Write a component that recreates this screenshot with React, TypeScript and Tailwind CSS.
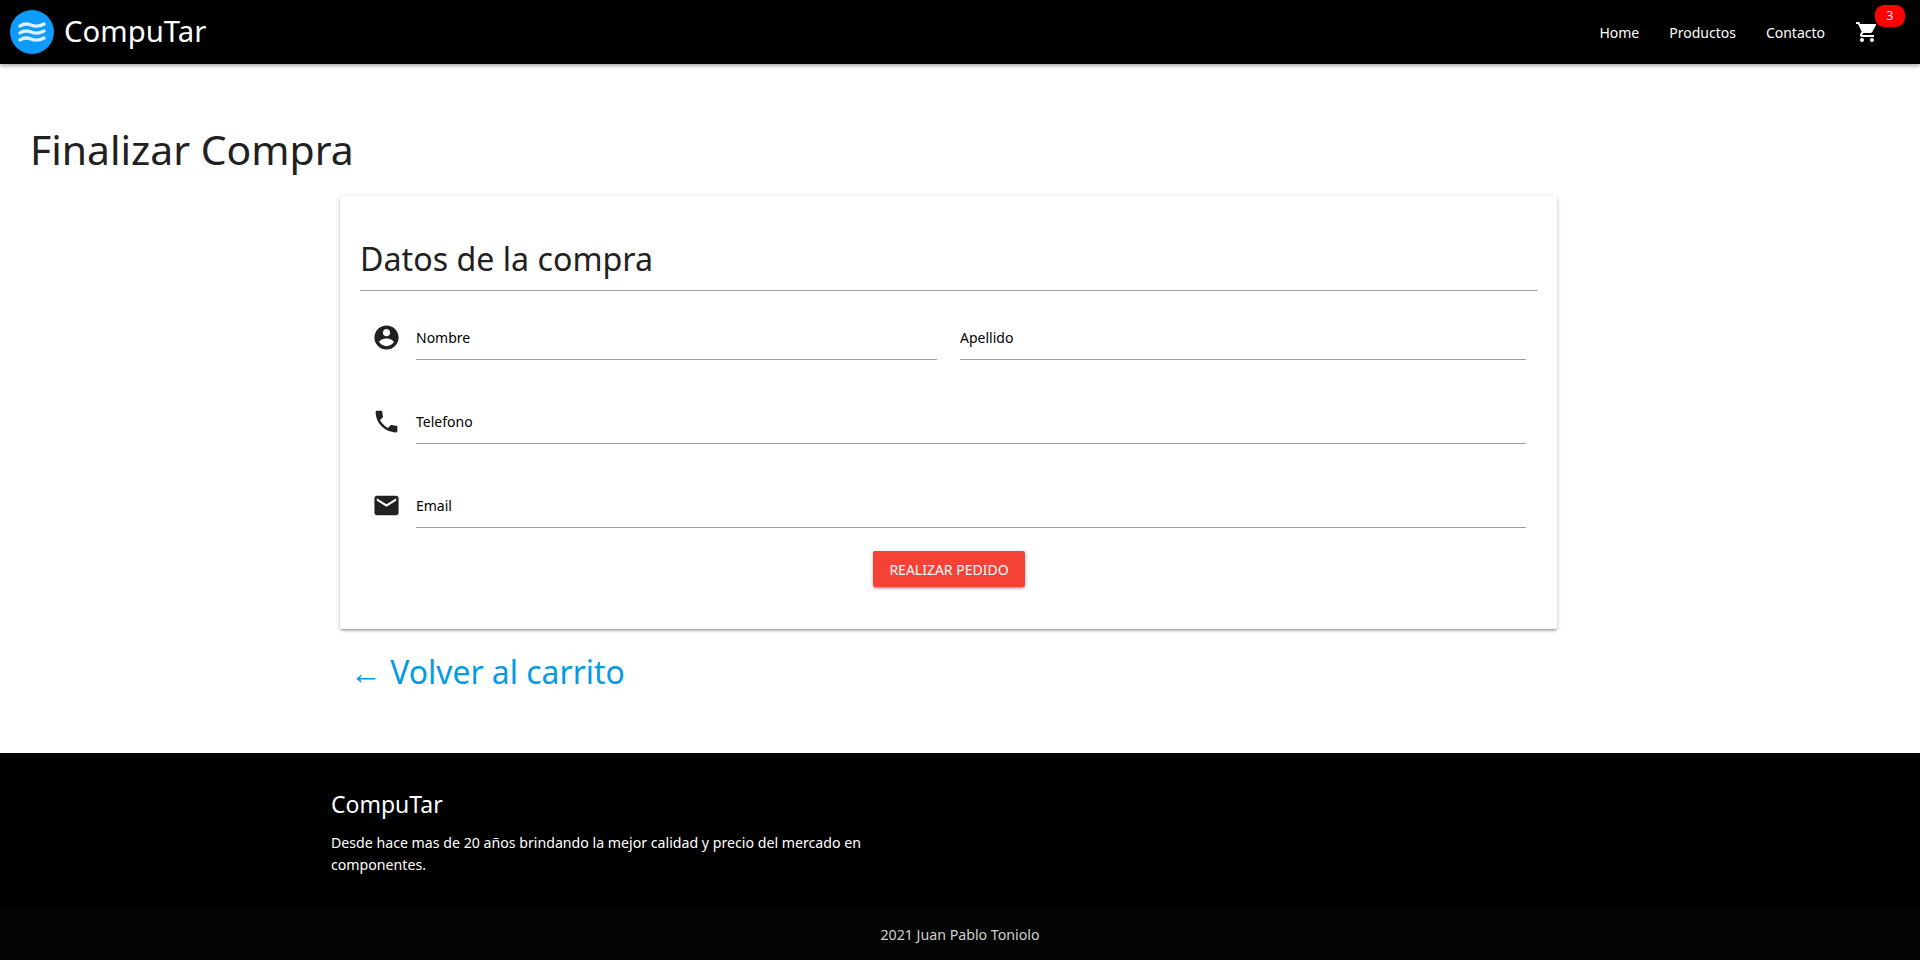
import { MdEmail, MdPhone, MdShoppingCart } from "react-icons/md";

const font = { fontFamily: '"Noto Sans", "Open Sans", sans-serif' };

function Logo() {
  return (
    <svg width="44" height="44" viewBox="0 0 44 44" aria-hidden="true">
      <circle cx="22" cy="22" r="22" fill="#0f9bfb" />
      <g fill="none" stroke="#ffffff" strokeOpacity="0.85" strokeWidth="3.4" strokeLinecap="round">
        <path d="M10 16c3.500-2.600 7-2.600 11-1s8 1.800 13-1" />
        <path d="M10 23c3.500-2.600 7-2.600 11-1s8 1.800 13-1" />
        <path d="M10 30c3.500-2.600 7-2.600 11-1s8 1.800 13-1" />
      </g>
    </svg>
  );
}

function AccountIcon() {
  return (
    <svg width="29" height="29" viewBox="0 0 24 24" fill="#212121" aria-hidden="true">
      <path d="M12 2C6.48 2 2 6.48 2 12s4.48 10 10 10 10-4.48 10-10S17.52 2 12 2zm0 3c1.660 0 3 1.340 3 3s-1.340 3-3 3-3-1.340-3-3 1.340-3 3-3zm0 14.200c-2.500 0-4.710-1.280-6-3.220.03-1.990 4-3.080 6-3.080 1.990 0 5.970 1.090 6 3.080-1.290 1.940-3.500 3.220-6 3.220z" />
    </svg>
  );
}

function Field({ label, className }: { label: string; className: string }) {
  return (
    <div className={`h-[44px] border-b border-[#9e9e9e] flex items-center text-[14px] text-black ${className}`}>
      <span className="-mt-[1px]">{label}</span>
    </div>
  );
}

export default function App() {
  return (
    <div style={font} className="min-h-[960px] flex flex-col bg-white text-[#212121]">
      <header className="h-[64px] shrink-0 bg-black text-white flex items-center justify-between pl-[10px] pr-[41px] shadow-[0_2px_4px_rgba(0,0,0,0.35)] relative z-10">
        <div className="flex items-center gap-[10px]">
          <Logo />
          <span className="text-[29.300px] leading-none">CompuTar</span>
        </div>
        <nav className="flex items-center gap-[30px] text-[14px]">
          <span>Home</span>
          <span>Productos</span>
          <span>Contacto</span>
          <span className="relative w-[24px] h-[24px]">
            <MdShoppingCart size={24} className="text-white" />
            <span className="absolute -top-[15px] left-[20px] w-[30px] h-[22px] rounded-[9px] bg-[#ff0000] text-white text-[12px] flex items-center justify-center">
              3
            </span>
          </span>
        </nav>
      </header>

      <main className="flex-1 flex flex-col">
        <h1 className="text-[40.900px] leading-[60px] pl-[30px] pt-[55px] pb-[17px] font-normal">Finalizar Compra</h1>
        <div className="w-[1217px] ml-[340px] h-[433px] bg-white px-[20px] pt-[20px] shadow-[0_2px_2px_0_rgba(0,0,0,0.14),0_3px_1px_-2px_rgba(0,0,0,0.12),0_1px_5px_0_rgba(0,0,0,0.2)] rounded-[2px]">
          <h2 className="text-[32.200px] leading-[86px] h-[75px] border-b border-[#9e9e9e] font-normal">Datos de la compra</h2>
          <div className="pl-[11px] pr-[11px]">
            <div className="flex items-start mt-[25px] h-[44px]">
              <div className="w-[45px] shrink-0 h-[44px] flex items-start pt-[7px] pl-[1px]"><AccountIcon /></div>
              <Field label="Nombre" className="w-[521px]" />
              <Field label="Apellido" className="w-[566px] ml-[23px]" />
            </div>
            <div className="flex items-start mt-[40px] h-[44px]">
              <div className="w-[45px] shrink-0 h-[44px] flex items-start pt-[7px] pl-[1px]"><MdPhone size={29} color="#212121" /></div>
              <Field label="Telefono" className="flex-1" />
            </div>
            <div className="flex items-start mt-[40px] h-[44px]">
              <div className="w-[45px] shrink-0 h-[44px] flex items-start pt-[7px] pl-[1px]"><MdEmail size={29} color="#212121" /></div>
              <Field label="Email" className="flex-1" />
            </div>
            <div className="flex justify-start mt-[23px] pl-[502px]">
              <button className="w-[152px] h-[36px] rounded-[2px] bg-[#f44336] text-white text-[14px] uppercase shadow-[0_2px_2px_0_rgba(0,0,0,0.14),0_3px_1px_-2px_rgba(0,0,0,0.12),0_1px_5px_0_rgba(0,0,0,0.2)]">
                Realizar pedido
              </button>
            </div>
          </div>
        </div>
        <a className="ml-[350px] mt-[18px] text-[31.900px] leading-[50px] text-[#039be5]">← Volver al carrito</a>
      </main>

      <footer className="h-[207px] shrink-0 bg-black text-white flex flex-col">
        <div className="flex-1 pl-[331px] pt-[35px]">
          <div className="text-[23px] leading-[32px]">CompuTar</div>
          <p className="w-[560px] mt-[12px] text-[14.170px] leading-[22px]">
            Desde hace mas de 20 años brindando la mejor calidad y precio del mercado en componentes.
          </p>
        </div>
        <div className="h-[50px] bg-[#050505] text-[#d0d0d0] text-[14.200px] flex items-center justify-center">
          2021 Juan Pablo Toniolo
        </div>
      </footer>
    </div>
  );
}
